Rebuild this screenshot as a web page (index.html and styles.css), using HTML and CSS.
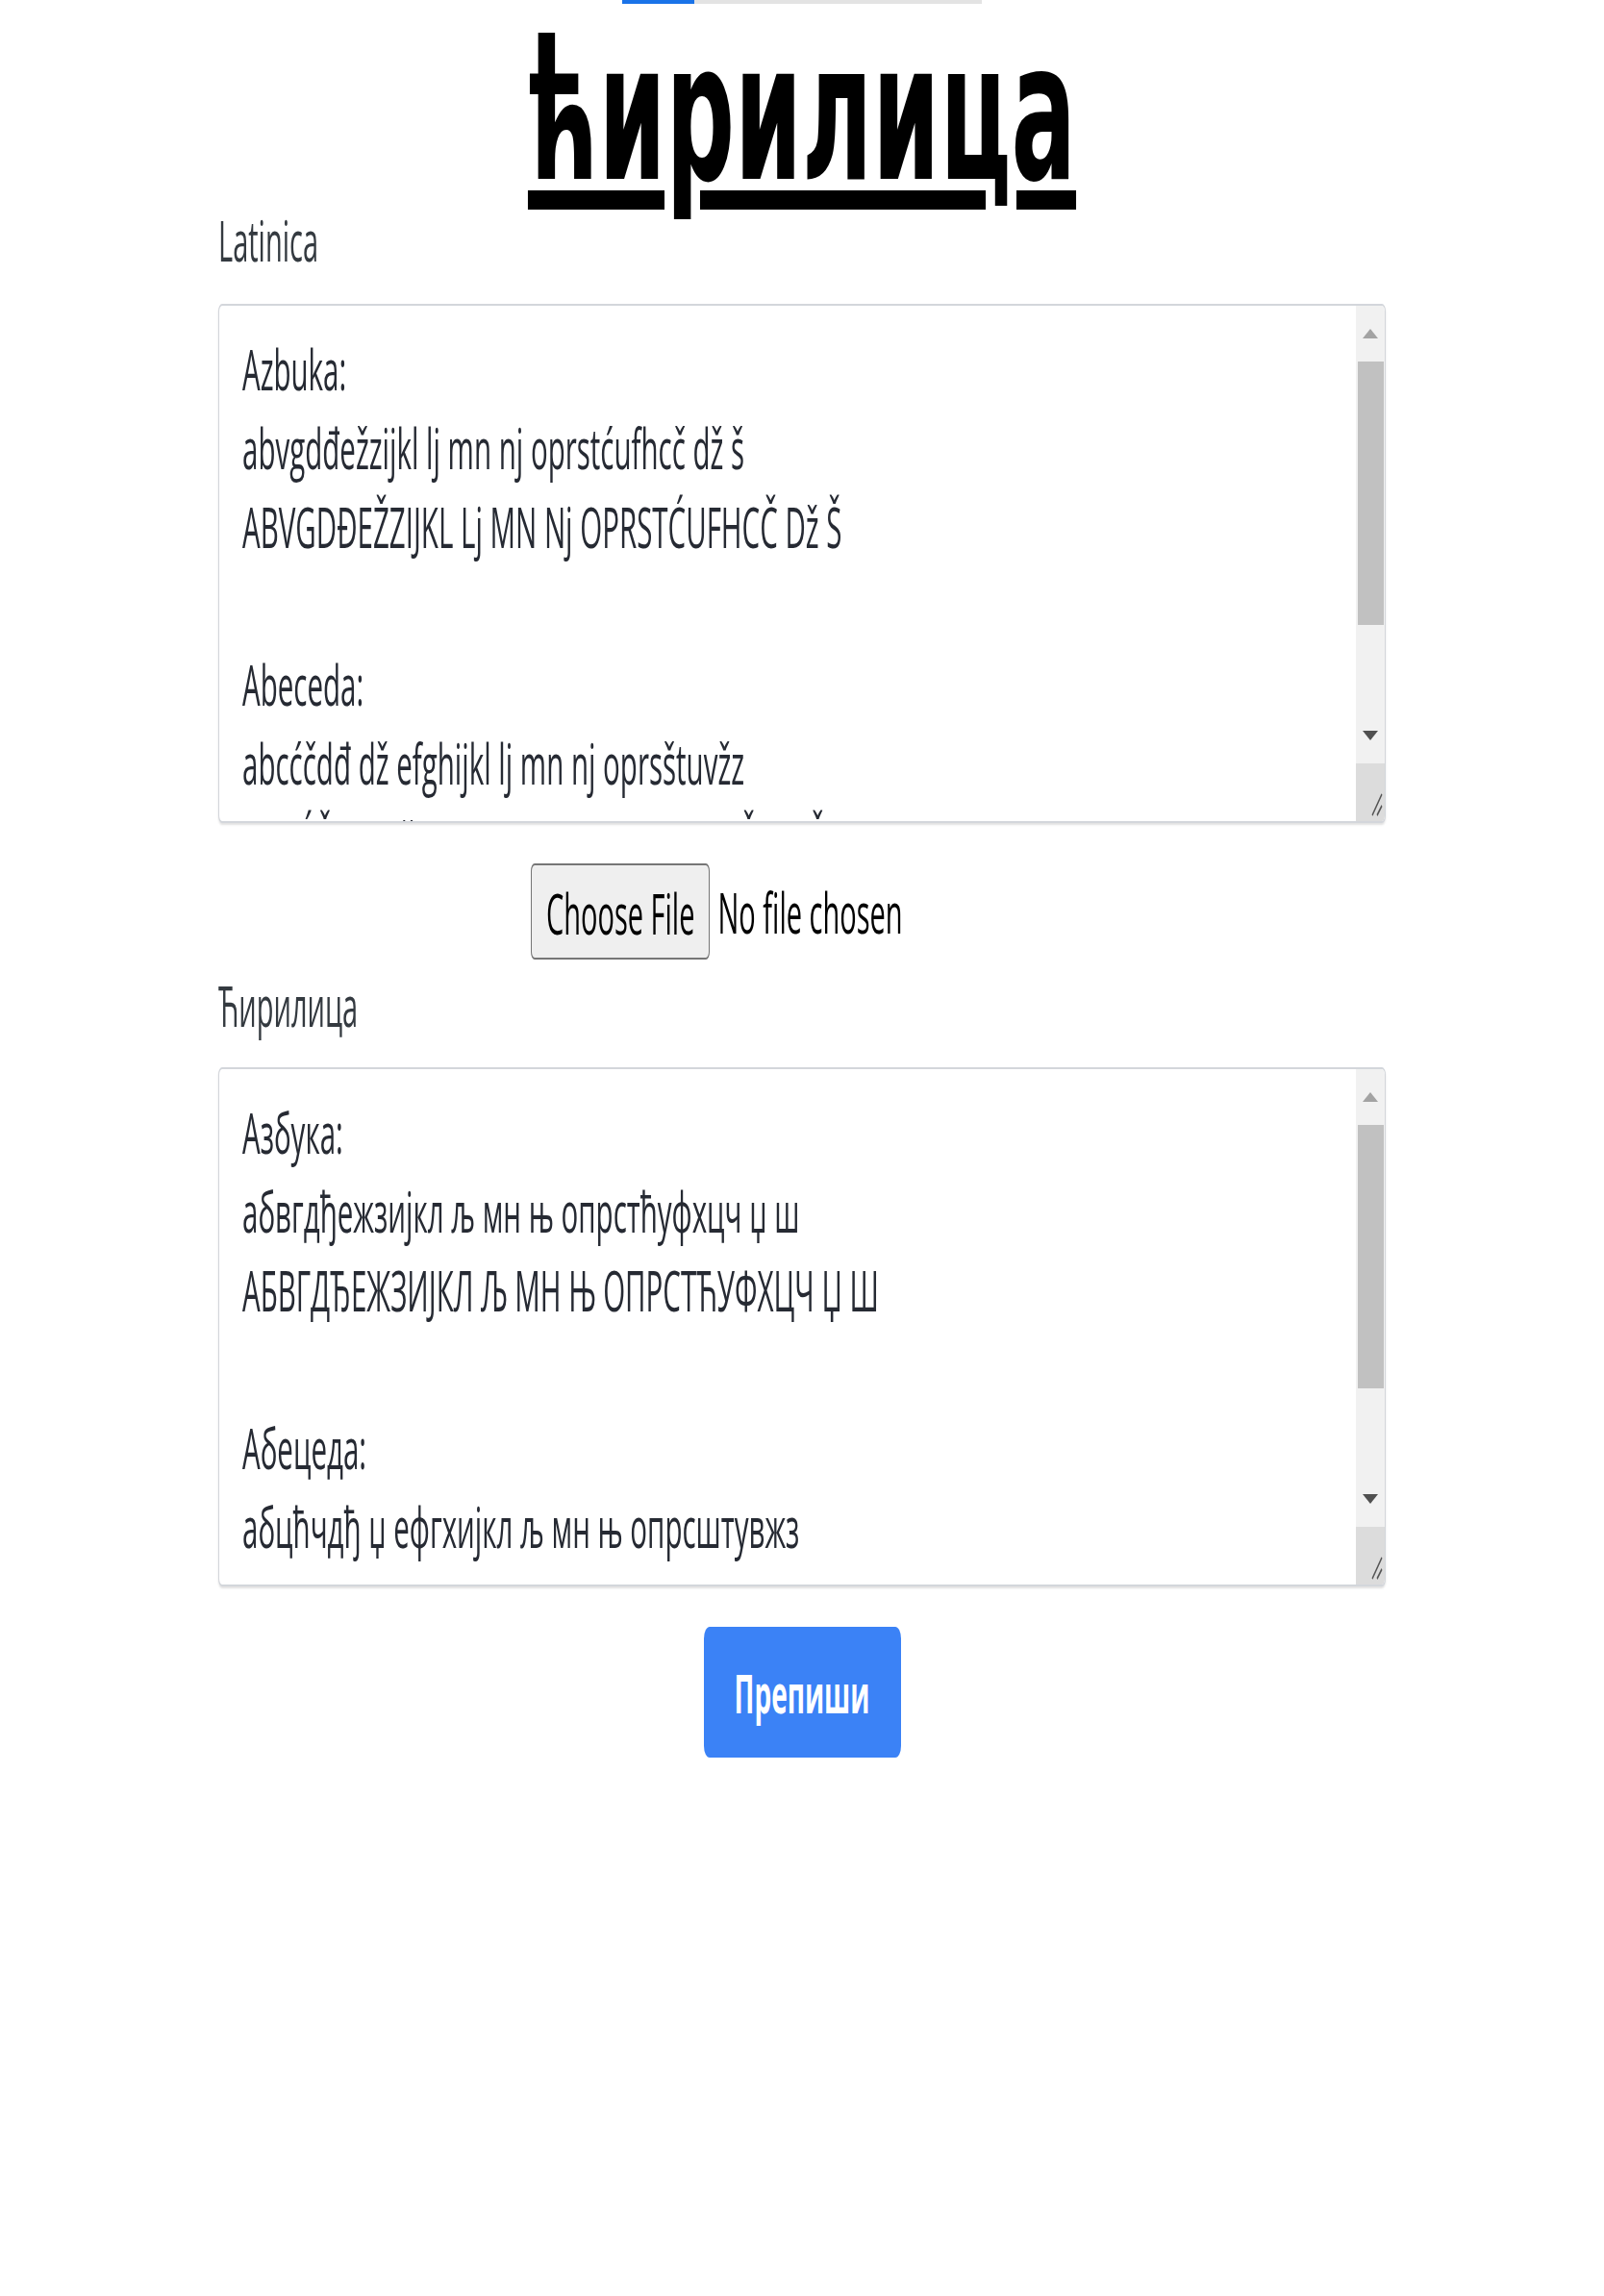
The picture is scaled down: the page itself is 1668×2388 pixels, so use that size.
FILE: index.html
```html
<!DOCTYPE html>
<html lang="sr">
<head>
<meta charset="utf-8">
<title>ћирилица</title>
<link rel="stylesheet" href="styles.css">
</head>
<body>
<div class="page">
  <div class="progress"><div class="progress-fill" style="width:20%"></div></div>
  <h1 class="title">ћирилица</h1>
  <main class="converter">
    <label class="field-label" for="lat">Latinica</label>
    <div class="box">
      <textarea id="lat" class="box-text" readonly>Azbuka:
abvgdđežzijkl lj mn nj oprstćufhcč dž š
ABVGDĐEŽZIJKL Lj MN Nj OPRSTĆUFHCČ Dž Š

Abeceda:
abcćčdđ dž efghijkl lj mn nj oprsštuvžz
ABCĆČDĐ Dž EFGHIJKL Lj MN Nj OPRSŠTUVŽZ</textarea>
      <div class="sbar" aria-hidden="true">
        <div class="sbar-btn"><svg width="16" height="5" viewBox="0 0 16 5"><polygon points="8,0 16,5 0,5" fill="#a3a3a3"/></svg></div>
        <div class="sbar-track"><div class="sbar-thumb"></div></div>
        <div class="sbar-btn"><svg width="16" height="5" viewBox="0 0 16 5"><polygon points="0,0 16,0 8,5" fill="#505050"/></svg></div>
        <div class="sbar-corner"><svg width="30" height="30" viewBox="0 0 30 30"><path d="M27 16 L17 27 M27 22 L22 27" stroke="#555" stroke-width="1.3" fill="none"/></svg></div>
      </div>
    </div>
    <div class="file-row"><input type="file" class="file-input"></div>
    <label class="field-label field-label-cyr" for="cyr">Ћирилица</label>
    <div class="box box-cyr">
      <textarea id="cyr" class="box-text" readonly>Азбука:
абвгдђежзијкл љ мн њ опрстћуфхцч џ ш
АБВГДЂЕЖЗИЈКЛ Љ МН Њ ОПРСТЋУФХЦЧ Џ Ш

Абецеда:
абцћчдђ џ ефгхијкл љ мн њ опрсштувжз
АБЦЋЧДЂ Џ ЕФГХИЈКЛ Љ МН Њ ОПРСШТУВЖЗ</textarea>
      <div class="sbar" aria-hidden="true">
        <div class="sbar-btn"><svg width="16" height="5" viewBox="0 0 16 5"><polygon points="8,0 16,5 0,5" fill="#a3a3a3"/></svg></div>
        <div class="sbar-track"><div class="sbar-thumb"></div></div>
        <div class="sbar-btn"><svg width="16" height="5" viewBox="0 0 16 5"><polygon points="0,0 16,0 8,5" fill="#505050"/></svg></div>
        <div class="sbar-corner"><svg width="30" height="30" viewBox="0 0 30 30"><path d="M27 16 L17 27 M27 22 L22 27" stroke="#555" stroke-width="1.3" fill="none"/></svg></div>
      </div>
    </div>
    <div class="actions"><button type="button" class="btn-primary">Препиши</button></div>
  </main>
</div>
</body>
</html>
```
FILE: styles.css
```css
html, body {
  margin: 0;
  padding: 0;
  background: #fff;
  overflow: hidden;
}

body {
  width: 1668px;
  height: 2388px;
  font-family: "Open Sans", "Noto Sans", "DejaVu Sans", sans-serif;
}

/* the captured screen is stretched 2x vertically */
.page {
  width: 1668px;
  transform: scaleY(2);
  transform-origin: 0 0;
}

.progress {
  width: 374px;
  height: 1.5px;
  margin: 0 auto;
  background: #e3e3e3;
}

.progress-fill {
  height: 100%;
  background: #1a73e8;
}

.title {
  margin: 13px 0 0;
  height: 88px;
  font-family: "DejaVu Sans", sans-serif;
  font-weight: 700;
  font-size: 100px;
  line-height: 88px;
  text-align: center;
  color: #000;
  text-decoration: underline;
  text-decoration-thickness: 10px;
  text-underline-offset: 6px;
}

.converter {
  width: 1214px;
  margin: 0 auto;
}

.field-label {
  display: block;
  margin: 2px 0 0;
  font-size: 29px;
  line-height: 39px;
  color: #343a40;
}

.field-label-cyr {
  margin-top: 3.5px;
}

.box {
  display: flex;
  height: 270px;
  box-sizing: border-box;
  margin-top: 14.5px;
  border: 1px solid #d3d6db;
  border-radius: 4px;
  background: #fff;
  box-shadow: 0 1px 1.5px rgba(0, 0, 0, 0.12);
  overflow: hidden;
}

.box-cyr {
  margin-top: 13.5px;
}

.box-text {
  flex: 1;
  min-width: 0;
  margin: 0;
  border: 0;
  outline: none;
  resize: none;
  overflow: hidden;
  padding: 12px 10px 0 24px;
  font-family: inherit;
  font-size: 29.5px;
  line-height: 41px;
  color: #262a33;
  background: transparent;
}

.sbar {
  display: flex;
  flex-direction: column;
  width: 30px;
  background: #f1f1f1;
}

.sbar-btn {
  height: 28.5px;
  display: flex;
  align-items: center;
  justify-content: center;
}

.sbar-track {
  flex: 1;
  padding: 0 1px 0 2px;
}

.sbar-thumb {
  height: 137px;
  background: #c1c1c1;
}

.sbar-corner {
  height: 30px;
  background: #dcdcdc;
}

.sbar-corner svg {
  display: block;
}

.file-row {
  margin-top: 21px;
}

.file-input {
  display: block;
  width: 564px;
  height: 50px;
  margin: 0 auto;
  padding: 0;
  font-family: inherit;
  font-size: 29px;
  color: #000;
}

.file-input::file-selector-button {
  height: 50px;
  margin: 0 8px 0 0;
  padding: 0 15px;
  border: 1px solid #767676;
  border-radius: 4px;
  background: #efefef;
  font-family: inherit;
  font-size: 29px;
  color: #000;
}

.actions {
  display: flex;
  justify-content: center;
  margin-top: 21px;
}

.btn-primary {
  width: 205px;
  height: 68px;
  padding: 0;
  border: 0;
  border-radius: 6px;
  background: #3b82f6;
  color: #fff;
  font-family: inherit;
  font-weight: 700;
  font-size: 28px;
}
```
